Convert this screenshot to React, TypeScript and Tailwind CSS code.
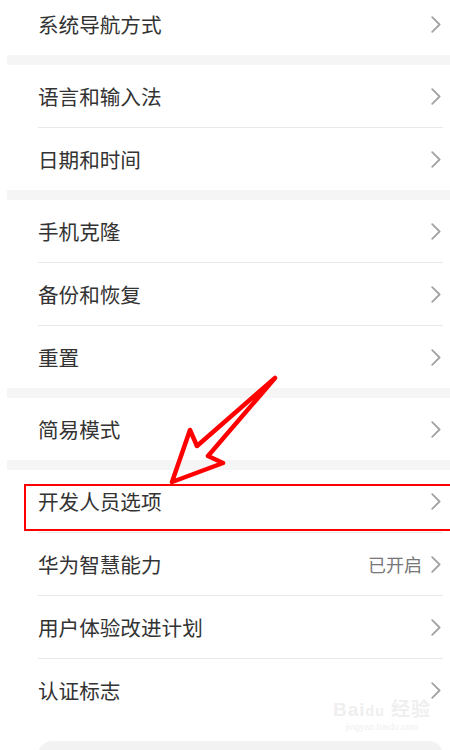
import React from "react";

type Row = { title: string; value?: string };

const sections: Row[][] = [
  [{ title: "系统导航方式" }],
  [{ title: "语言和输入法" }, { title: "日期和时间" }],
  [{ title: "手机克隆" }, { title: "备份和恢复" }, { title: "重置" }],
  [{ title: "简易模式" }],
  [
    { title: "开发人员选项" },
    { title: "华为智慧能力", value: "已开启" },
    { title: "用户体验改进计划" },
    { title: "认证标志" },
  ],
];

const Chevron = () => (
  <svg width="10" height="17" viewBox="0 0 10 17" className="shrink-0">
    <path d="M1.2 1.2 L8.6 8.5 L1.2 15.8" fill="none" stroke="#a3a3a3" strokeWidth="1.8" strokeLinecap="round" strokeLinejoin="round" />
  </svg>
);

const SettingRow: React.FC<{ row: Row }> = ({ row }) => (
  <div className="flex h-[62px] items-center justify-between pl-[38px] pr-[9px]">
    <span className="text-[20.6px] text-[#333333]">{row.title}</span>
    <div className="flex items-center gap-[9px]">
      {row.value && <span className="text-[18px] text-[#777777]">{row.value}</span>}
      <Chevron />
    </div>
  </div>
);

export default function App() {
  return (
    <div
      className="relative h-[750px] w-[450px] overflow-hidden bg-white"
      style={{ fontFamily: '"Noto Sans CJK SC", "Noto Sans", sans-serif' }}
    >
      <div className="-mt-[7px] flex flex-col">
        {sections.map((rows, i) => (
          <div key={i}>
            {i > 0 && <div className="ml-[7px] h-[10px] bg-[#f5f5f5]" />}
            {rows.map((row, j) => (
              <div key={row.title}>
                {j > 0 && <div className="ml-[38px] mr-[7px] h-px bg-[#e9e9e9]" />}
                <SettingRow row={row} />
              </div>
            ))}
          </div>
        ))}
        <div className="mt-[20px] ml-[38px] mr-[7px] h-[40px] rounded-[14px] bg-[#f2f2f2]" />
      </div>

      {/* watermark */}
      <div className="absolute left-[333px] top-[700px] flex flex-col items-center leading-none text-[#efefef]">
        <span className="text-[19px] font-bold tracking-[1px]" style={{ fontFamily: '"Liberation Sans", "Noto Sans CJK SC", sans-serif' }}>
          Bai<span className="text-[14px]">du</span> 经验
        </span>
        <span className="mt-[4px] text-[9px]" style={{ fontFamily: '"Liberation Sans", sans-serif' }}>jingyan.baidu.com</span>
      </div>

      {/* highlight box */}
      <div className="absolute left-[24px] top-[484px] h-[47px] w-[440px] border-2 border-[#ff0000]" />

      {/* arrow */}
      <svg className="absolute left-0 top-0" width="450" height="750" viewBox="0 0 450 750">
        <path
          d="M172 482 L190 430 L197 446 L275 378 L208 456 L223 463 Z"
          fill="none"
          stroke="#ff0000"
          strokeWidth="4.5"
          strokeLinejoin="round"
          strokeLinecap="round"
        />
      </svg>
    </div>
  );
}
